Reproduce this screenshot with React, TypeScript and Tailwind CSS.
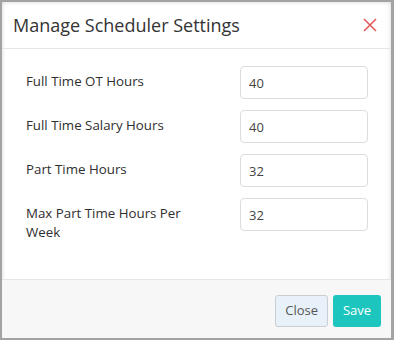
const rows = [
  { label: "Full Time OT Hours", value: "40" },
  { label: "Full Time Salary Hours", value: "40" },
  { label: "Part Time Hours", value: "32" },
  { label: "Max Part Time Hours Per Week", value: "32" },
];

const App = () => {
  return (
    <div
      className="w-[394px] h-[340px] bg-[#a3a3a3] p-[2px] pr-[3px]"
      style={{ fontFamily: '"Open Sans", sans-serif' }}
    >
      <div className="h-full flex flex-col bg-white shadow-[inset_0_0_4px_rgba(0,0,0,0.18)]">
        <div className="flex items-center justify-between h-[47px] pl-[11px] pr-[14px] border-b border-[#e5e5e5]">
          <div className="text-[18px] text-[#333]">Manage Scheduler Settings</div>
          <svg width="14" height="14" viewBox="0 0 14 14" className="-mt-[1px]">
            <path d="M1 1 L13 13 M13 1 L1 13" stroke="#e25a5a" strokeWidth="1.6" />
          </svg>
        </div>

        <div className="flex-1 flex flex-col gap-[11px] pt-[17px] pl-[24px] pr-[23px]">
          {rows.map((row) => (
            <div key={row.label} className="flex items-start justify-between">
              <div className="w-[180px] pt-[6px] text-[13.3px] font-medium leading-[19px] text-[#2e2e2e]">
                {row.label}
              </div>
              <input
                className="w-[128px] h-[33px] border border-[#dcdcdc] rounded-[4px] px-[8px] text-[13px] text-[#444] outline-none"
                defaultValue={row.value}
              />
            </div>
          ))}
        </div>

        <div className="h-[59px] flex items-start justify-end gap-[5px] pt-[15px] pr-[10px] bg-[#f7f7f7] border-t border-[#e5e5e5]">
          <button className="h-[32px] px-[9px] rounded-[3px] border border-[#c9ced3] bg-[#e8f1fa] text-[13px] text-[#555]">
            Close
          </button>
          <button className="h-[32px] w-[48px] rounded-[3px] bg-[#1cc5bd] text-[13px] text-white">
            Save
          </button>
        </div>
      </div>
    </div>
  );
};

export default App;
